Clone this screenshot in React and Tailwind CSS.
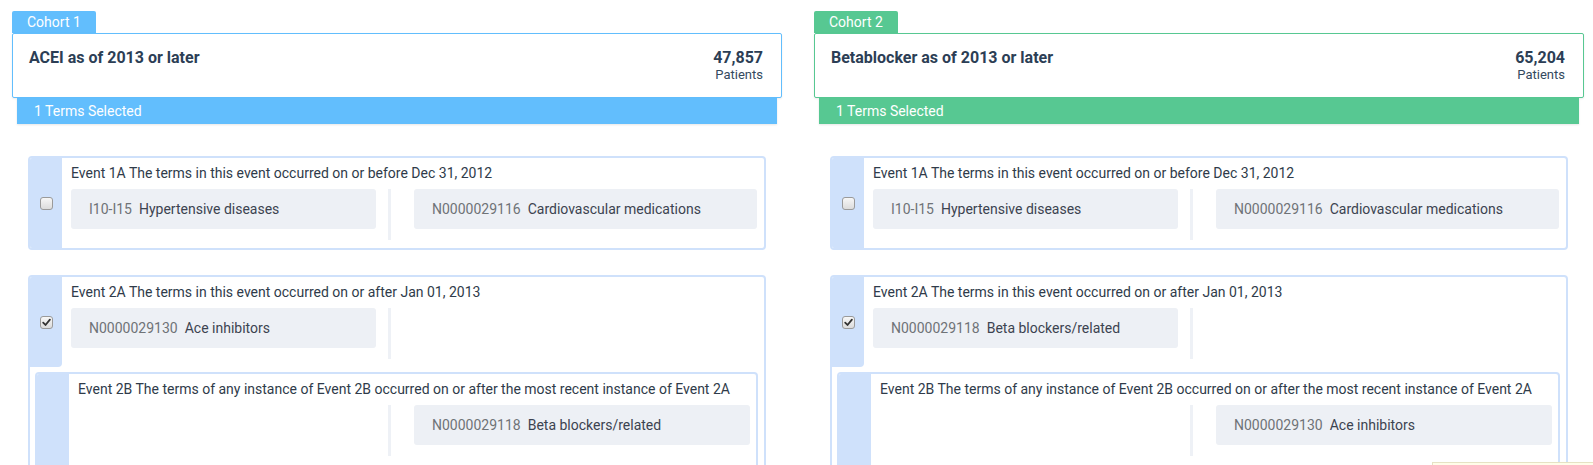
import React from "react";

const FONT = { fontFamily: "Roboto, 'Noto Sans', Arial, sans-serif" };

function Chip({ code, label }) {
  return (
    <div className="h-[40px] flex items-center rounded-[3px] bg-[#edf0f5] pl-[18px] text-[14px] leading-[20px] whitespace-nowrap overflow-hidden">
      <span className="text-[#6f7377]">{code}</span>
      <span className="ml-[7px] text-[#3c4350]">{label}</span>
    </div>
  );
}

function TermsRow({ left, right }) {
  return (
    <div className="mt-[6px] flex">
      <div className="w-1/2 flex">
        <div className="flex-1">{left ? <Chip {...left} /> : null}</div>
        <div className="ml-[12px] mr-[23px] w-[3px] h-[51px] bg-[#eef1f6]" />
      </div>
      <div className="w-1/2">{right ? <Chip {...right} /> : null}</div>
    </div>
  );
}

function EventTitle({ children }) {
  return <div className="text-[14px] leading-[20px] text-[#2f3b4a] whitespace-nowrap">{children}</div>;
}

function Checkbox({ checked }) {
  return (
    <div className="w-[13px] h-[13px] rounded-[3px] border border-[#9a9a9a] bg-gradient-to-b from-[#f7f7f7] to-[#dcdcdc] flex items-center justify-center">
      {checked ? (
        <svg width="9" height="9" viewBox="0 0 9 9">
          <path d="M1.2 4.6 L3.5 7 L7.9 1.6" fill="none" stroke="#333" strokeWidth="1.8" strokeLinecap="round" strokeLinejoin="round" />
        </svg>
      ) : null}
    </div>
  );
}

function Event1({ left, right }) {
  return (
    <div className="flex border-2 border-[#cfe1fb] rounded-[4px] overflow-hidden">
      <div className="w-[32px] bg-[#cfe1fb] flex items-center justify-center">
        <Checkbox checked={false} />
      </div>
      <div className="flex-1 pl-[9px] pr-[7px] pt-[5px] pb-[8px]">
        <EventTitle>Event 1A The terms in this event occurred on or before Dec 31, 2012</EventTitle>
        <TermsRow left={left} right={right} />
      </div>
    </div>
  );
}

function Event2({ a, b }) {
  return (
    <div className="mt-[25px] border-2 border-[#cfe1fb] rounded-[4px] overflow-hidden">
      <div className="flex">
        <div className="w-[32px] bg-[#cfe1fb] rounded-br-[4px] flex items-center justify-center">
          <Checkbox checked={true} />
        </div>
        <div className="flex-1 pl-[9px] pr-[7px] pt-[5px] pb-[8px]">
          <EventTitle>Event 2A The terms in this event occurred on or after Jan 01, 2013</EventTitle>
          <TermsRow left={a} />
        </div>
      </div>
      <div className="mt-[5px] ml-[5px] mr-[6px] flex border-2 border-[#cfe1fb] rounded-[4px] overflow-hidden">
        <div className="w-[32px] bg-[#cfe1fb]" />
        <div className="flex-1 pl-[9px] pr-[6px] pt-[5px] pb-[8px]">
          <EventTitle>Event 2B The terms of any instance of Event 2B occurred on or after the most recent instance of Event 2A</EventTitle>
          <TermsRow right={b} />
          <div className="h-[40px]" />
        </div>
      </div>
      <div className="h-[40px]" />
    </div>
  );
}

function Column({ cohort, color, border, title, count, e1, e2a, e2b }) {
  return (
    <div className="flex-1 min-w-0 flex flex-col">
      <div className={`self-start h-[22px] px-[15px] rounded-t-[2px] text-white text-[14px] leading-[22px] ${color}`}>
        {cohort}
      </div>
      <div className={`h-[65px] border ${border} rounded-[2px] bg-white flex justify-between pl-[16px] pr-[18px] pt-[14px] shadow-[0_1px_2px_rgba(0,0,0,0.08)]`}>
        <div className="text-[16px] leading-[20px] font-bold text-[#2c3e55]">{title}</div>
        <div className="text-right">
          <div className="text-[16px] leading-[20px] font-bold text-[#2c3e55]">{count}</div>
          <div className="text-[13px] leading-[14px] text-[#34495e]">Patients</div>
        </div>
      </div>
      <div className={`mx-[5px] h-[26px] ${color} text-white text-[14px] leading-[26px] pl-[17px] shadow-[0_1px_2px_rgba(0,0,0,0.1)]`}>
        1 Terms Selected
      </div>
      <div className="mt-[32px] px-[16px]">
        <Event1 left={e1[0]} right={e1[1]} />
        <Event2 a={e2a} b={e2b} />
      </div>
    </div>
  );
}

export default function App() {
  return (
    <div className="relative w-[1593px] h-[465px] overflow-hidden bg-white" style={FONT}>
      <div className="flex gap-[32px] pl-[12px] pr-[9px] pt-[11px]">
        <Column
          cohort="Cohort 1"
          color="bg-[#62befd]"
          border="border-[#62befd]"
          title="ACEI as of 2013 or later"
          count="47,857"
          e1={[
            { code: "I10-I15", label: "Hypertensive diseases" },
            { code: "N0000029116", label: "Cardiovascular medications" },
          ]}
          e2a={{ code: "N0000029130", label: "Ace inhibitors" }}
          e2b={{ code: "N0000029118", label: "Beta blockers/related" }}
        />
        <Column
          cohort="Cohort 2"
          color="bg-[#57c892]"
          border="border-[#57c892]"
          title="Betablocker as of 2013 or later"
          count="65,204"
          e1={[
            { code: "I10-I15", label: "Hypertensive diseases" },
            { code: "N0000029116", label: "Cardiovascular medications" },
          ]}
          e2a={{ code: "N0000029118", label: "Beta blockers/related" }}
          e2b={{ code: "N0000029130", label: "Ace inhibitors" }}
        />
      </div>
      <div className="absolute left-[1432px] top-[462px] w-[300px] h-[40px] bg-[#fffde9] border border-[#e6e2c4]" />
    </div>
  );
}
